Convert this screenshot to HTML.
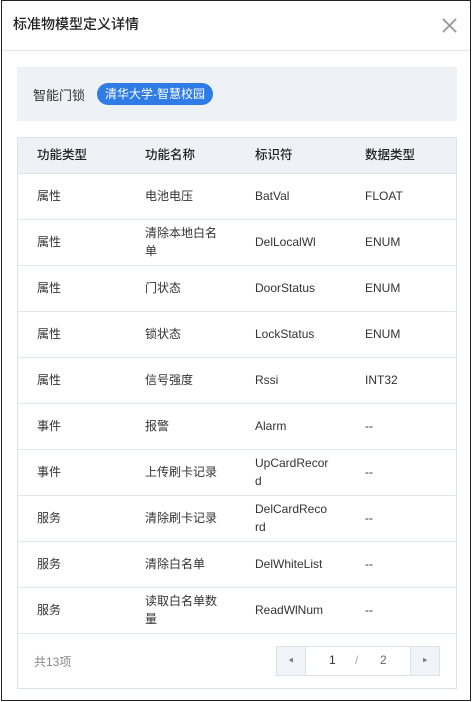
<!DOCTYPE html><html><head><meta charset="utf-8"><style>
*{margin:0;padding:0;box-sizing:border-box}
body{width:472px;height:702px;background:#fff;font-family:"Liberation Sans","Noto Sans CJK SC",sans-serif;position:relative;overflow:hidden;color:#333}
.frame{position:absolute;left:1px;top:0;width:470px;height:701px;border:1px solid #222}
.t{position:absolute;left:13px;top:14px;font-size:14px;color:#222;font-weight:500}
.x{position:absolute;left:441px;top:17px;width:17px;height:17px}
.hr{position:absolute;left:2px;right:2px;top:50px;height:1px;background:#e4e7ec}
.info{position:absolute;left:17px;top:67px;width:440px;height:54px;background:#eef2f7}
.info .l{position:absolute;left:16px;top:18px;font-size:13px;color:#333}
.tag{position:absolute;left:80px;top:16px;height:22px;padding:0 8px;border-radius:11px;background:#2f7ce6;color:#fff;font-size:12px;line-height:22px}
.tb{position:absolute;left:17px;top:137px;width:440px;height:552px;border:1px solid #dde3ea}
.th{position:absolute;left:0;top:0;width:438px;height:36px;background:#eef2f7;border-bottom:1px solid #dde3ea}
.row{position:absolute;left:0;width:438px;height:46px;border-bottom:1px solid #e3e8ee}
.c{position:absolute;font-size:12px;line-height:18px;color:#333;top:50%;transform:translateY(calc(-50% - 1px))}
.th .c{font-size:12.5px;color:#222;font-weight:500}
.c1{left:19px}.c2{left:127px;width:78px}.c3{left:237px;width:78px;word-break:break-all}.c4{left:347px}
.tot{position:absolute;left:16px;top:515px;font-size:12px;color:#888}
.pg{position:absolute;left:258px;top:508px;width:164px;height:30px;border:1px solid #dde3ea;background:#fff}
.pb{position:absolute;top:0;width:29px;height:28px;background:#f0f3f7;font-size:5px;color:#777;text-align:center;line-height:28px}
</style></head><body>
<div class="frame"></div>
<div class="t">标准物模型定义详情</div>
<svg class="x" viewBox="0 0 18 18"><path d="M2 2L16 16M16 2L2 16" stroke="#999" stroke-width="2"/></svg>
<div class="hr"></div>
<div class="info"><div class="l">智能门锁</div><div class="tag">清华大学-智慧校园</div></div>
<div class="tb">
<div class="th"><div class="c c1">功能类型</div><div class="c c2">功能名称</div><div class="c c3">标识符</div><div class="c c4">数据类型</div></div>
<div class="row" style="top:36px"><div class="c c1">属性</div><div class="c c2">电池电压</div><div class="c c3">BatVal</div><div class="c c4">FLOAT</div></div>
<div class="row" style="top:82px"><div class="c c1">属性</div><div class="c c2">清除本地白名单</div><div class="c c3">DelLocalWl</div><div class="c c4">ENUM</div></div>
<div class="row" style="top:128px"><div class="c c1">属性</div><div class="c c2">门状态</div><div class="c c3">DoorStatus</div><div class="c c4">ENUM</div></div>
<div class="row" style="top:174px"><div class="c c1">属性</div><div class="c c2">锁状态</div><div class="c c3">LockStatus</div><div class="c c4">ENUM</div></div>
<div class="row" style="top:220px"><div class="c c1">属性</div><div class="c c2">信号强度</div><div class="c c3">Rssi</div><div class="c c4">INT32</div></div>
<div class="row" style="top:266px"><div class="c c1">事件</div><div class="c c2">报警</div><div class="c c3">Alarm</div><div class="c c4">--</div></div>
<div class="row" style="top:312px"><div class="c c1">事件</div><div class="c c2">上传刷卡记录</div><div class="c c3">UpCardRecor d</div><div class="c c4">--</div></div>
<div class="row" style="top:358px"><div class="c c1">服务</div><div class="c c2">清除刷卡记录</div><div class="c c3">DelCardReco rd</div><div class="c c4">--</div></div>
<div class="row" style="top:404px"><div class="c c1">服务</div><div class="c c2">清除白名单</div><div class="c c3">DelWhiteList</div><div class="c c4">--</div></div>
<div class="row" style="top:450px"><div class="c c1">服务</div><div class="c c2">读取白名单数量</div><div class="c c3">ReadWlNum</div><div class="c c4">--</div></div>
<div class="tot">共13项</div>
<div class="pg"><div class="pb" style="left:0;border-right:1px solid #dde3ea">◀</div>
<div style="position:absolute;left:52px;top:6px;font-size:12px;color:#333">1</div>
<div style="position:absolute;left:78px;top:6px;font-size:12px;color:#aaa">/</div>
<div style="position:absolute;left:103px;top:6px;font-size:12px;color:#666">2</div>
<div class="pb" style="right:0;border-left:1px solid #dde3ea">▶</div></div>
</div>
</body></html>
